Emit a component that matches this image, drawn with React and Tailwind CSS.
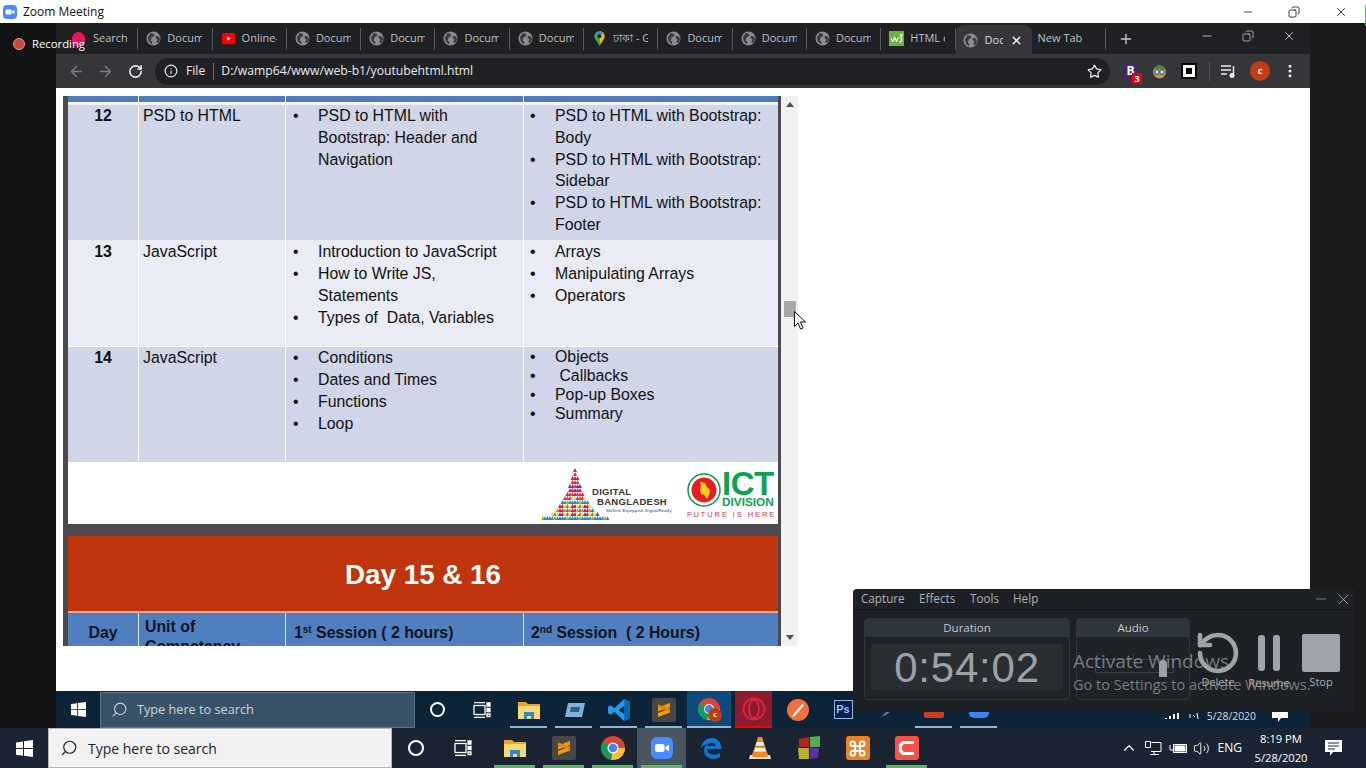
import { ChevronUp, Command, Info, Minus, MoreVertical, Plus, RotateCcw, RotateCw, Search, Star, ArrowLeft, ArrowRight, Volume2, X, Copy } from 'lucide-react';

const TABS = [
  { label: 'Search', icon: 'none' },
  { label: 'Docum' },
  { label: 'Online-', icon: 'yt' },
  { label: 'Docum' },
  { label: 'Docum' },
  { label: 'Docum' },
  { label: 'Docum' },
  { label: 'ঢাকা - G', icon: 'maps' },
  { label: 'Docum' },
  { label: 'Docum' },
  { label: 'Docum' },
  { label: 'HTML e', icon: 'w3' },
];

function Globe() {
  return (
    <svg width="15" height="15" viewBox="0 0 16 16" className="shrink-0">
      <circle cx="8" cy="8" r="7.5" fill="#8b8c8f" />
      <path d="M5 2l3 1 1 2-3 2-1 3 2 2-1 2-3-3-1-4zM11 5l3 1 1 3-2 4-2-1 1-3-2-2z" fill="#3a3b3e" />
    </svg>
  );
}

function TabIcon({ kind }) {
  if (kind === 'none') return <span className="w-[15px] shrink-0" />;
  if (kind === 'yt') {
    return (
      <svg width="15" height="15" viewBox="0 0 16 16" className="shrink-0">
        <rect x="1" y="2" width="14" height="12" rx="2" fill="#f00" />
        <path d="M6.5 5.5l4 2.5-4 2.5z" fill="#fff" />
      </svg>
    );
  }
  if (kind === 'maps') {
    return (
      <svg width="15" height="15" viewBox="0 0 16 16" className="shrink-0">
        <path d="M8 0a5.5 5.5 0 0 0-5.5 5.5C2.500 9 6 11.500 8 16z" fill="#34a853" />
        <path d="M8 0a5.500 5.500 0 0 1 5.500 5.500C13.500 9 10 11.500 8 16z" fill="#fbbc04" />
        <path d="M4 2l4-2 4 2-4 4z" fill="#4285f4" />
        <circle cx="8" cy="5.500" r="2" fill="#1f2125" />
      </svg>
    );
  }
  if (kind === 'w3') {
    return (
      <svg width="15" height="15" viewBox="0 0 16 16" className="shrink-0">
        <rect width="16" height="16" fill="#6cb33f" />
        <path d="M2 8l2 3 2-4 2 4 2-4M11 4h3l-2 3c2 0 2 5-1 5" fill="none" stroke="#fff" strokeWidth="1.200" />
      </svg>
    );
  }
  return <Globe />;
}

function Tab({ label, icon }) {
  return (
    <div className="w-[74.300px] h-[22px] shrink-0 flex items-center gap-[6px] pl-[8px] border-r border-[#55575b]">
      <TabIcon kind={icon} />
      <span className="w-[35px] overflow-hidden whitespace-nowrap text-[11px] text-[#bcc0c5]">{label}</span>
    </div>
  );
}

function WinLogo({ size = 17, color = '#fff' }) {
  return (
    <svg width={size} height={size} viewBox="0 0 17 17">
      <path d="M0 2.400l7-1v6.700H0zM8 1.200L17 0v8.100H8zM0 9h7v6.700l-7-1zM8 9h9v8l-9-1.200z" fill={color} />
    </svg>
  );
}

function Cortana({ size = 15 }) {
  return <span className="block rounded-full border-2 border-white" style={{ width: size, height: size }} />;
}

function TaskView() {
  return (
    <svg width="18" height="16" viewBox="0 0 18 16" fill="none" stroke="#fff" strokeWidth="1.300">
      <path d="M1 0.700h11M1 15.300h11" />
      <rect x="1" y="3.500" width="11" height="9" />
      <path d="M14 1v3h3V1zM14 6.500v3h3v-3z" fill="#fff" />
      <path d="M14 12h3v2.500h-3z" />
    </svg>
  );
}

function Explorer() {
  return (
    <svg width="22" height="20" viewBox="0 0 22 20">
      <path d="M0 2h8l2 2h12v15H0z" fill="#e5a52f" />
      <path d="M0 6h22v13H0z" fill="#f8d775" />
      <path d="M6 12h10v7h-3v-3H9v3H6z" fill="#2f87d2" />
    </svg>
  );
}

function Sublime() {
  return (
    <svg width="24" height="24" viewBox="0 0 24 24">
      <rect width="24" height="24" rx="2" fill="#474747" />
      <path d="M6 9.500L18 5v4L6 13.500zM18 14.500L6 19v-4l12-4.500z" fill="#ff9800" />
      <path d="M6 9.500l12 4.500v-3.500L6 6.500z" fill="#e58a00" />
    </svg>
  );
}

function Chrome({ size = 24 }) {
  return (
    <svg width={size} height={size} viewBox="0 0 24 24">
      <circle cx="12" cy="12" r="12" fill="#db4437" />
      <path d="M12 12h12A12 12 0 0 1 10 23.800z" fill="#fbc02d" />
      <path d="M12 12L10 23.800A12 12 0 0 1 1.600 6z" fill="#0f9d58" />
      <circle cx="12" cy="12" r="5.500" fill="#fff" />
      <circle cx="12" cy="12" r="4.300" fill="#4285f4" />
    </svg>
  );
}

function ZoomIcon({ size = 22 }) {
  return (
    <svg width={size} height={size} viewBox="0 0 22 22">
      <rect width="22" height="22" rx="6" fill="#4a8cff" />
      <rect x="4" y="7" width="9.500" height="8" rx="2" fill="#fff" />
      <path d="M14.500 10l3.500-2.500v7L14.500 12z" fill="#fff" />
    </svg>
  );
}

function Edge() {
  return (
    <svg width="22" height="22" viewBox="0 0 22 22">
      <path d="M1 11C2 4 7 1 12 1c6 0 9.500 5 9.500 11H7c0 6 8 7 13 4v4.500c-7 3-16 1-16-7 0-3 1.500-5.500 4-7-3 .5-5.500 2.500-7 4.500zM7.500 9h8c0-4-7-4.500-8 0z" fill="#0a78d7" fillRule="evenodd" />
    </svg>
  );
}

function Vlc() {
  return (
    <svg width="22" height="24" viewBox="0 0 22 24">
      <path d="M9 1h4l6 18H3z" fill="#f48b1f" />
      <path d="M8 6h6l1 3.500H7zM6.200 12h9.600l1 3.500H5.200z" fill="#fff" />
      <path d="M1 19h20l1 4H0z" fill="#e3e3e3" />
      <path d="M4 19h14l1 2H3z" fill="#f48b1f" />
    </svg>
  );
}

function Squares() {
  return (
    <svg width="22" height="24" viewBox="0 0 22 24">
      <path d="M1 3l10-2v10H1z" fill="#b3261e" />
      <path d="M12 1l10-1v11H12z" fill="#4caf50" />
      <path d="M0 12h11v11H1z" fill="#b5b32c" />
      <path d="M12 12h9l-1 10-8 1z" fill="#5c2fb0" />
    </svg>
  );
}

function Xampp() {
  return (
    <span className="w-[24px] h-[24px] rounded-[3px] bg-[#e8832a] flex items-center justify-center">
      <Command size={19} color="#fff" strokeWidth={2.500} />
    </span>
  );
}

function Camtasia() {
  return (
    <svg width="24" height="24" viewBox="0 0 24 24">
      <rect width="24" height="24" rx="3" fill="#f6524b" />
      <path d="M19 6.500H8L5.500 9v6L8 17.500h11" fill="none" stroke="#fff" strokeWidth="3.200" />
    </svg>
  );
}

function VsCode() {
  return (
    <svg width="22" height="22" viewBox="0 0 24 24">
      <path d="M17.500 0L24 3v18l-6.500 3L7 14l-4 3.200L0 15.500v-7L3 6.800 7 10zM18 7l-6.500 5 6.500 5z" fill="#1f9cf0" fillRule="evenodd" />
      <path d="M17.500 0L24 3v18l-6.500 3 .5-7V7z" fill="#0a66b0" />
    </svg>
  );
}

const STEP_BTN = 'w-[45px] h-[37px] flex items-center justify-center relative';
const INNER_LINE = 'absolute bottom-0 inset-x-[4px] h-[2px] bg-[#8fb7d6]';

function InnerTaskbar() {
  return (
    <div className="h-[37px] shrink-0 bg-[#0c2338] flex items-center">
      <div className="w-[44px] flex justify-center"><WinLogo size={15} /></div>
      <div className="w-[315px] h-[36px] bg-[#3a5269] border border-[#5d7488] flex items-center pl-[10px] gap-[9px] text-[12.700px] text-[#c9d2da] font-['Open_Sans',sans-serif]">
        <Search size={17} className="-scale-x-100 text-[#c9d2da]" strokeWidth={1.500} />
        <span className="pt-[1px]">Type here to search</span>
      </div>
      <div className="w-[45px] flex justify-center"><Cortana size={15} /></div>
      <div className="w-[44px] flex justify-center"><TaskView /></div>
      <div className={`${STEP_BTN} ml-[2px]`}>
        <Explorer />
        <span className={INNER_LINE} />
      </div>
      <div className={STEP_BTN}>
        <svg width="22" height="16" viewBox="0 0 22 16">
          <path d="M5 1h17l-3 14H2z" fill="#7fb2d9" />
          <path d="M8 5h9l-1 5H7z" fill="#2f5f85" />
        </svg>
        <span className={INNER_LINE} />
      </div>
      <div className={STEP_BTN}>
        <VsCode />
        <span className={INNER_LINE} />
      </div>
      <div className={STEP_BTN}>
        <Sublime />
        <span className={INNER_LINE} />
      </div>
      <div className="w-[44px] h-[37px] ml-[1px] flex items-center justify-center relative bg-[#0e4a7c] border-b-2 border-[#8fb7d6]">
        <Chrome size={22} />
        <span className="absolute right-[9px] bottom-[4px] w-[14px] h-[14px] rounded-full bg-[#c23b0f] text-white text-[7px] font-bold flex items-center justify-center">c</span>
      </div>
      <div className="w-[37px] h-[37px] ml-[4px] bg-[#8a1c30] border-b-2 border-[#ff0000] flex items-center justify-center">
        <svg width="24" height="24" viewBox="0 0 24 24" fill="none" stroke="#e0243f" strokeWidth="1.800">
          <circle cx="12" cy="12" r="10.500" />
          <ellipse cx="12" cy="12" rx="5" ry="9" />
        </svg>
      </div>
      <div className="w-[52px] flex justify-center">
        <svg width="22" height="22" viewBox="0 0 22 22">
          <circle cx="11" cy="11" r="11" fill="#f2703c" />
          <path d="M5 18l3-1 9-11-1.500-1-9 10z" fill="#fff" />
        </svg>
      </div>
      <div className="w-[38px] flex justify-center">
        <span className="w-[19px] h-[19px] bg-[#0a1c4a] border border-[#8fb7e6] text-[#8fc4f2] text-[11px] font-bold flex items-center justify-center font-['Liberation_Sans',sans-serif]">Ps</span>
      </div>
      <div className="w-[53px] flex justify-center">
        <svg width="18" height="16" viewBox="0 0 18 16"><path d="M1 15L12 4l5-3-3 6-8 6z" fill="#6b6f9c" /></svg>
      </div>
      <div className="w-[37px] flex justify-center relative h-[37px] items-center">
        <span className="block w-[20px] h-[16px] bg-[#c8401f] rounded-[2px]" />
        <span className="absolute bottom-0 inset-x-0 h-[2px] bg-[#8fb7d6]" />
      </div>
      <div className="w-[37px] ml-[8px] flex justify-center relative h-[37px] items-center">
        <span className="block w-[20px] h-[16px] bg-[#3b82f6] rounded-[5px]" />
        <span className="absolute bottom-0 inset-x-0 h-[2px] bg-[#8fb7d6]" />
      </div>
      <div className="flex-1 flex justify-end items-center pt-[14px] text-[10.400px] text-[#d5dbe0] font-['Open_Sans',sans-serif]">
        <svg className="mr-[9px]" width="15" height="6" viewBox="0 0 15 6" fill="#fff"><path d="M0 5h2v1H0zM4 3h2v3H4zM8 1h2v5H8zM12 0h2v6h-2z" /></svg>
        <svg width="10" height="6" viewBox="0 0 10 6" fill="none" stroke="#fff"><path d="M1 1v4M4 2l2 2M8 0l1 6" /></svg>
        <span className="w-[8px]" />
        <span>5/28/2020</span>
        <svg className="ml-[16px] mr-[22px]" width="16" height="12" viewBox="0 0 16 12">
          <path d="M0 0h16v8H9l-3 4V8H0z" fill="#fff" />
        </svg>
      </div>
    </div>
  );
}

function Underlined({ children, active }) {
  return (
    <div className={`w-[49px] h-[40px] relative flex items-center justify-center ${active ? 'bg-[#4a5562]' : ''}`}>
      {children}
      <span className="absolute bottom-0 inset-x-[4px] h-[3px] bg-[#5fb560]" />
    </div>
  );
}

function Plain({ children }) {
  return <div className="w-[49px] h-[40px] flex items-center justify-center">{children}</div>;
}

function BottomTaskbar() {
  return (
    <div className="h-[40px] shrink-0 bg-[#1b2433] flex items-center">
      <div className="w-[48px] flex justify-center"><WinLogo size={17} /></div>
      <div className="w-[344px] h-[40px] bg-[#f1f1f1] border border-[#b4b4b4] flex items-center pl-[11px] gap-[10px] text-[14px] text-[#1c2430] font-['Open_Sans',sans-serif]">
        <Search size={18} className="-scale-x-100 text-[#1c2430]" strokeWidth={1.500} />
        <span className="pt-[1px]">Type here to search</span>
      </div>
      <div className="w-[48px] flex justify-center"><Cortana size={16} /></div>
      <div className="w-[46px] flex justify-center"><TaskView /></div>
      <div className="ml-[4px] flex">
        <Underlined><Explorer /></Underlined>
        <Underlined><Sublime /></Underlined>
        <Underlined><Chrome /></Underlined>
        <Underlined active><ZoomIcon /></Underlined>
        <Plain><Edge /></Plain>
        <Plain><Vlc /></Plain>
        <Plain><Squares /></Plain>
        <Plain><Xampp /></Plain>
        <Underlined><Camtasia /></Underlined>
      </div>
      <div className="flex-1 flex items-center justify-end text-white font-['Open_Sans',sans-serif]">
        <ChevronUp size={18} strokeWidth={1.500} />
        <svg className="ml-[7px]" width="17" height="15" viewBox="0 0 17 15" fill="none" stroke="#fff">
          <path d="M6.500 1.500H16v9H6M9 10.500v3M5 13.500h9M.5.500h5v6h-5z" />
        </svg>
        <svg className="ml-[7px]" width="19" height="13" viewBox="0 0 19 13" fill="none" stroke="#fff">
          <rect x="4.500" y="2.500" width="13" height="8" />
          <rect x="6" y="4" width="10" height="5" fill="#fff" />
          <path d="M1 3v5h4" />
        </svg>
        <Volume2 className="ml-[5px]" size={17} strokeWidth={1.300} />
        <span className="ml-[8px] text-[12px]">ENG</span>
        <div className="w-[62px] ml-[8px] text-center text-[11.200px] leading-[19px]">
          <div>8:19 PM</div>
          <div>5/28/2020</div>
        </div>
        <div className="w-[42px] flex justify-center">
          <svg width="17" height="16" viewBox="0 0 17 16">
            <path d="M0 0h17v12H8l-3 4v-4H0z" fill="#fff" />
            <path d="M3 3h11M3 6h11M3 9h7" stroke="#1b2433" />
          </svg>
        </div>
        <span className="w-[12px]" />
      </div>
    </div>
  );
}

const TRI_COLORS = ['#d81b60', '#e53935', '#8e24aa', '#fdd835', '#00acc1', '#43a047', '#fb8c00', '#c2185b', '#1e88e5', '#e91e63'];

function DigitalTriangle() {
  const cells = [];
  const widths = [0, 0, 1, 1, 2, 2, 3, 4, 5, 6, 7, 9, 13];
  widths.forEach((half, row) => {
    for (let i = -half; i <= half; i++) {
      const mix = row < 7 ? (row + i * i) % 3 : (row * row * 7 + i * i * 13 + i * 3 + 100) % 10;
      cells.push({ x: 33 + i * 2.500, y: row * 4 + 1, c: TRI_COLORS[mix] });
    }
  });
  return (
    <svg width="67" height="53" viewBox="0 0 67 53" className="shrink-0">
      {cells.map((p, i) => (
        <path key={i} d={`M${p.x} ${p.y}l2 4h-4z`} fill={p.c} />
      ))}
    </svg>
  );
}

function DigitalBangladesh() {
  return (
    <div className="flex items-center">
      <DigitalTriangle />
      <div className="-ml-[17px] mt-[14px] leading-none text-[#333] w-[80px]">
        <div className="text-[9.500px] font-bold tracking-[0.300px]">DIGITAL</div>
        <div className="ml-[5px] mt-[1px] text-[9.500px] font-bold tracking-[0.300px] whitespace-nowrap">BANGLADESH</div>
        <div className="ml-[14px] mt-[2px] text-[4.400px] font-bold text-[#5b7fc7] whitespace-nowrap">Skilled. Equipped. DigitalReady</div>
      </div>
    </div>
  );
}

function IctDivision() {
  return (
    <div className="w-[88px] flex flex-col mt-[3px]">
      <div className="flex items-start">
        <svg width="34" height="34" viewBox="0 0 34 34" className="shrink-0 mt-[2px]">
          <circle cx="17" cy="17" r="16" fill="#fff" stroke="#0a9a4e" strokeWidth="1.500" />
          <circle cx="17" cy="17" r="12.500" fill="#e31e24" />
          <path d="M13 9l5 1 2 4 3 3-1 5-2 4-3-4-3-1-1-5 1-3z" fill="#f7d117" />
        </svg>
        <div className="ml-[1px] text-[#0aa34f] font-bold">
          <div className="text-[33px] leading-[26px] tracking-[-0.500px]">ICT</div>
          <div className="text-[11.800px] leading-[11px]">DIVISION</div>
        </div>
      </div>
      <div className="mt-[2px] text-[7.500px] leading-[9px] tracking-[1.900px] text-[#d8334a] whitespace-nowrap">FUTURE IS HERE</div>
    </div>
  );
}

function Bullets({ items, lead }) {
  return (
    <ul className={lead}>
      {items.map((t, i) => (
        <li key={i} className="flex">
          <span className="w-[26px] shrink-0 pl-[1px]">•</span>
          <span className="whitespace-pre-wrap">{t}</span>
        </li>
      ))}
    </ul>
  );
}

function Row({ h, bg, day, unit, first, second, secondLead, secondOffset, offset, lineBelow }) {
  const cell = `${bg} ${offset}`;
  return (
    <div className={`grid grid-cols-[70px_146px_237px_254px] gap-x-[1px] shrink-0 bg-white text-[15.850px] leading-[22px] text-[#111] ${lineBelow ? 'pb-px' : ''}`} style={{ height: h }}>
      <div className={`${cell} text-center font-bold`}>{day}</div>
      <div className={`${cell} pl-[4px]`}>{unit}</div>
      <div className={`${cell} pl-[6px] pr-[18px]`}><Bullets items={first} lead="leading-[22px]" /></div>
      <div className={`${bg} ${secondOffset || offset} pl-[5px]`}><Bullets items={second} lead={secondLead} /></div>
    </div>
  );
}

function SlideTable() {
  return (
    <div className="w-[718px] h-[550px] overflow-hidden bg-[#4b4b4f] pl-[5px] pr-[3px] flex flex-col font-['Liberation_Sans',sans-serif]">
      <div className="h-[6px] shrink-0 grid grid-cols-[70px_146px_237px_254px] gap-x-[1px] bg-white">
        <div className="bg-[#4f7cb8]" /><div className="bg-[#4f7cb8]" /><div className="bg-[#4f7cb8]" /><div className="bg-[#4f7cb8]" />
      </div>
      <div className="h-[3px] shrink-0 bg-[#f2f4fa]" />
      <Row h={135} bg="bg-[#d0d5e8]" offset="pt-0" secondLead="leading-[21.800px]" day="12" unit="PSD to HTML"
        first={['PSD to HTML with Bootstrap: Header and Navigation']}
        second={['PSD to HTML with Bootstrap: Body', 'PSD to HTML with Bootstrap: Sidebar', 'PSD to HTML with Bootstrap: Footer']} />
      <Row h={107} bg="bg-[#e9ebf5]" offset="pt-px" secondLead="leading-[22px]" lineBelow day="13" unit="JavaScript"
        first={['Introduction to JavaScript', 'How to Write JS, Statements', 'Types of  Data, Variables']}
        second={['Arrays', 'Manipulating Arrays', 'Operators']} />
      <Row h={115} bg="bg-[#d0d5e8]" offset="pt-0" secondOffset="pt-px" secondLead="leading-[18.900px]" day="14" unit="JavaScript"
        first={['Conditions', 'Dates and Times', 'Functions', 'Loop']}
        second={['Objects', ' Callbacks', 'Pop-up Boxes', 'Summary']} />
      <div className="h-[62px] shrink-0 bg-white flex items-center justify-end gap-[15px] pr-[3px]">
        <DigitalBangladesh />
        <IctDivision />
      </div>
      <div className="h-[12px] shrink-0" />
      <div className="h-[75px] shrink-0 bg-[#c0350e] flex items-center justify-center pt-[3px] text-white font-bold text-[27.800px]">Day 15 &amp; 16</div>
      <div className="h-[2px] shrink-0 bg-[#e6a898]" />
      <div className="h-[40px] shrink-0 grid grid-cols-[70px_146px_237px_254px] gap-x-[1px] bg-[#dfe6f2] text-[15.850px] font-bold text-[#0d1320]">
        <div className="bg-[#4f7fbe] text-center pt-[9px] leading-[22px]">Day</div>
        <div className="bg-[#4f7fbe] pl-[6px] pt-[4px] leading-[20px]">Unit of<br />Competency</div>
        <div className="bg-[#4f7fbe] pl-[8px] pt-[9px] leading-[22px]">1<sup className="text-[10px]">st</sup> Session ( 2 hours)</div>
        <div className="bg-[#4f7fbe] pl-[7px] pt-[9px] leading-[22px] whitespace-pre">2<sup className="text-[10px]">nd</sup> Session  ( 2 Hours)</div>
      </div>
    </div>
  );
}

function Scrollbar() {
  return (
    <div className="w-[17px] h-[550px] bg-[#f1f0f3] relative">
      <span className="absolute top-[6px] left-[5px] w-0 h-0 border-x-[4px] border-x-transparent border-b-[5px] border-b-[#505050]" />
      <span className="absolute top-[205px] left-[3px] w-[12px] h-[16px] bg-[#a8a8a8]" />
      <span className="absolute bottom-[6px] left-[5px] w-0 h-0 border-x-[4px] border-x-transparent border-t-[5px] border-t-[#505050]" />
    </div>
  );
}

function Browser() {
  return (
    <div className="w-[1254px] shrink-0 min-h-0 flex flex-col">
      {/* tab strip */}
      <div className="h-[31px] shrink-0 bg-[#202124] flex items-center pl-[8px] font-['Open_Sans',sans-serif]">
        {TABS.map((t, i) => <Tab key={i} label={t.label} icon={t.icon} />)}
        <div className="w-[76px] h-[31px] mt-[3px] bg-[#35363a] rounded-t-[8px] flex items-center pl-[7px] gap-[7px] shrink-0">
          <Globe />
          <span className="text-[11px] text-[#d7d9dc] w-[18px] overflow-hidden">Doc</span>
          <X size={13} className="text-white" strokeWidth={2.500} />
        </div>
        <div className="w-[74px] h-[22px] shrink-0 flex items-center pl-[6px] text-[11px] text-[#bcc0c5] border-r border-[#55575b]">New Tab</div>
        <Plus size={16} className="ml-[12px] text-[#c6c8cb]" />
        <div className="flex-1 flex items-center justify-end pr-[14px] gap-[28px] text-[#e4e5e7] pb-[6px]">
          <Minus size={14} strokeWidth={1.300} />
          <Copy size={12} className="-scale-x-100" strokeWidth={1.300} />
          <X size={14} strokeWidth={1.300} />
        </div>
      </div>
      {/* toolbar */}
      <div className="h-[34px] shrink-0 bg-[#35363a] flex items-center pl-[12px] text-[#d8dadd] font-['Open_Sans',sans-serif]">
        <ArrowLeft size={17} className="text-[#7b7d80]" />
        <ArrowRight size={17} className="ml-[12px] text-[#7b7d80]" />
        <RotateCw size={15} className="ml-[14px] text-[#e8eaed]" strokeWidth={2.500} />
        <div className="ml-[12px] w-[955px] h-[27px] shrink-0 rounded-full bg-[#202124] flex items-center pl-[9px] pr-[8px] text-[12.200px] text-[#e8eaed]">
          <Info size={14} />
          <span className="ml-[8px]">File</span>
          <span className="ml-[8px] w-px h-[17px] bg-[#6a6b6e]" />
          <span className="ml-[7px]">D:/wamp64/www/web-b1/youtubehtml.html</span>
          <Star size={15} className="ml-auto" />
        </div>
        <div className="relative ml-[13px] w-[15px] h-[15px] rounded-[2px] bg-[#3a2a6a] text-white text-[12px] font-bold flex items-center justify-center">
          B
          <span className="absolute -right-[4px] -bottom-[5px] w-[10px] h-[11px] bg-[#e8000d] text-[9px] leading-[11px] text-center">3</span>
        </div>
        <svg className="ml-[14px]" width="15" height="15" viewBox="0 0 15 15">
          <circle cx="7.500" cy="8" r="6.500" fill="#c98d54" />
          <path d="M2 5c2-5 9-5 11 0z" fill="#5f7f35" />
          <circle cx="5" cy="8" r="2.300" fill="#b9dff2" stroke="#2a4d78" />
          <circle cx="10" cy="8" r="2.300" fill="#b9dff2" stroke="#2a4d78" />
        </svg>
        <span className="ml-[14px] w-[16px] h-[16px] bg-black p-[2px] shrink-0 block">
          <span className="block w-[12px] h-[12px] bg-white p-[3px]">
            <span className="block w-[6px] h-[6px] bg-black" />
          </span>
        </span>
        <span className="ml-[12px] w-px h-[19px] bg-[#55575b]" />
        <svg className="ml-[11px]" width="15" height="13" viewBox="0 0 15 13" fill="none" stroke="#e8eaed" strokeWidth="1.400">
          <path d="M0 1h10M0 5h10M0 9h6M12.500 1v9" />
          <circle cx="11" cy="10.500" r="1.800" fill="#e8eaed" />
        </svg>
        <span className="ml-[14px] w-[20px] h-[20px] rounded-full bg-[#c33d13] text-[9px] font-bold text-white flex items-center justify-center">c</span>
        <MoreVertical size={16} className="ml-[12px] text-[#e8eaed]" strokeWidth={2.500} />
      </div>
      {/* page */}
      <div className="flex-1 min-h-0 bg-white pt-[8px] pl-[7px] flex items-start">
        <SlideTable />
        <Scrollbar />
      </div>
      <InnerTaskbar />
    </div>
  );
}

function Recorder() {
  return (
    <div className="absolute left-[853px] top-[589px] w-[502px] h-[123px] rounded-[4px] bg-[#1d2125] flex flex-col font-['Open_Sans',sans-serif] text-[#aab1b7]">
      <div className="h-[21px] shrink-0 border-b border-[#15181b] flex items-center pl-[8px] text-[11.700px]">
        <span className="w-[58px]">Capture</span>
        <span className="w-[51px]">Effects</span>
        <span className="w-[43px]">Tools</span>
        <span>Help</span>
        <Minus size={16} className="ml-auto text-[#8d9398]" strokeWidth={1.200} />
        <X size={17} className="ml-[6px] mr-[3px] text-[#a7adb2]" strokeWidth={1.200} />
      </div>
      <div className="flex pl-[11px] pt-[8px]">
        <div className="w-[206px] h-[82px] rounded-[4px] border border-[#31363c] bg-[#1f2328] flex flex-col">
          <div className="h-[18px] shrink-0 bg-[#2f353c] rounded-t-[3px] text-center text-[11.500px] leading-[18px] text-[#c3c9ce]">Duration</div>
          <div className="mx-[6px] mt-[7px] h-[46px] rounded-[3px] bg-[#2a2e33] flex items-center justify-center text-[42px] text-[#9aa1a8] tracking-[0.800px] font-['Liberation_Sans',sans-serif]">0:54:02</div>
        </div>
        <div className="ml-[6px] w-[114px] h-[82px] rounded-[4px] border border-[#31363c] bg-[#1f2328] flex flex-col">
          <div className="h-[18px] shrink-0 bg-[#2f353c] rounded-t-[3px] text-center text-[11.500px] leading-[18px] text-[#c3c9ce]">Audio</div>
          <div className="relative flex-1">
            <span className="absolute left-[56px] top-[16px] w-px h-[6px] bg-[#3c4147]" />
            <span className="absolute left-[18px] top-[22px] w-[79px] h-[14px] border border-[#3c4147]" />
            <span className="absolute left-[82px] top-[23px] w-[8px] h-[17px] rounded-t-[4px] bg-[#9aa1a8]" />
          </div>
        </div>
        <div className="w-[62px] ml-[-3px] flex flex-col items-center text-[11px]">
          <RotateCcw size={48} strokeWidth={2.300} className="text-[#9ea4aa] mt-[11px]" />
          <span className="-mt-[2px] leading-[14px]">Delete</span>
        </div>
        <div className="w-[40px] flex flex-col items-center text-[11px]">
          <div className="flex gap-[8px] mt-[17px] h-[36px]">
            <span className="w-[7px] h-[36px] rounded-[3px] bg-[#9ea4aa]" />
            <span className="w-[7px] h-[36px] rounded-[3px] bg-[#9ea4aa]" />
          </div>
          <span className="mt-[5px] leading-[14px]">Resume</span>
        </div>
        <div className="w-[52px] ml-[6px] flex flex-col items-center text-[11px]">
          <span className="mt-[16px] w-[38px] h-[38px] rounded-[2px] bg-[#9ea4aa]" />
          <span className="mt-[3px] leading-[14px]">Stop</span>
        </div>
      </div>
    </div>
  );
}

export default function App() {
  return (
    <div className="relative w-[1366px] h-[768px] overflow-hidden bg-[#141414] flex flex-col">
      {/* zoom title bar */}
      <div className="h-[23px] shrink-0 bg-white flex items-center pl-[3px] text-[12px] text-[#111] font-['Open_Sans',sans-serif]">
        <ZoomIcon size={14} />
        <span className="ml-[6px] pt-[1px]">Zoom Meeting</span>
        <div className="ml-auto flex items-center gap-[34px] pr-[18px] text-black">
          <Minus size={12} strokeWidth={1.500} />
          <Copy size={12} className="-scale-x-100" strokeWidth={1.500} />
          <X size={14} strokeWidth={1.300} />
        </div>
      </div>

      <div className="flex-1 min-h-0 flex">
        <div className="w-[56px] shrink-0 bg-[#141414]" />
        <Browser />
        <div className="w-[56px] shrink-0 bg-[#1a1a1a]" />
      </div>

      <BottomTaskbar />

      {/* overlays */}
      <span className="absolute right-0 top-[5px] w-px h-[21px] bg-[#22d63c]" />
      <span className="absolute left-[72px] top-[32px] w-[13px] h-[15px] rounded-full bg-[#e8145c]" />
      <div className="absolute left-[13px] top-[36px] flex items-center gap-[7px] text-[11.300px] text-white font-['Open_Sans',sans-serif]">
        <span className="w-[12px] h-[12px] rounded-full bg-[#c9473f] border border-[#e89a94]" />
        <span>Recording</span>
      </div>

      <svg className="absolute left-[794px] top-[311px]" width="12" height="19" viewBox="0 0 12 19">
        <path d="M.5.500v15l3.500-3.500 2.500 6 2.500-1-2.500-6h5z" fill="#fff" stroke="#111" />
      </svg>

      <Recorder />

      <div className="absolute left-[1073px] top-[649px] font-['Open_Sans',sans-serif] text-[#9ea3a8]/70 whitespace-nowrap">
        <div className="text-[19px] leading-[25px]">Activate Windows</div>
        <div className="text-[14.500px] leading-[22px]">Go to Settings to activate Windows.</div>
      </div>
    </div>
  );
}
